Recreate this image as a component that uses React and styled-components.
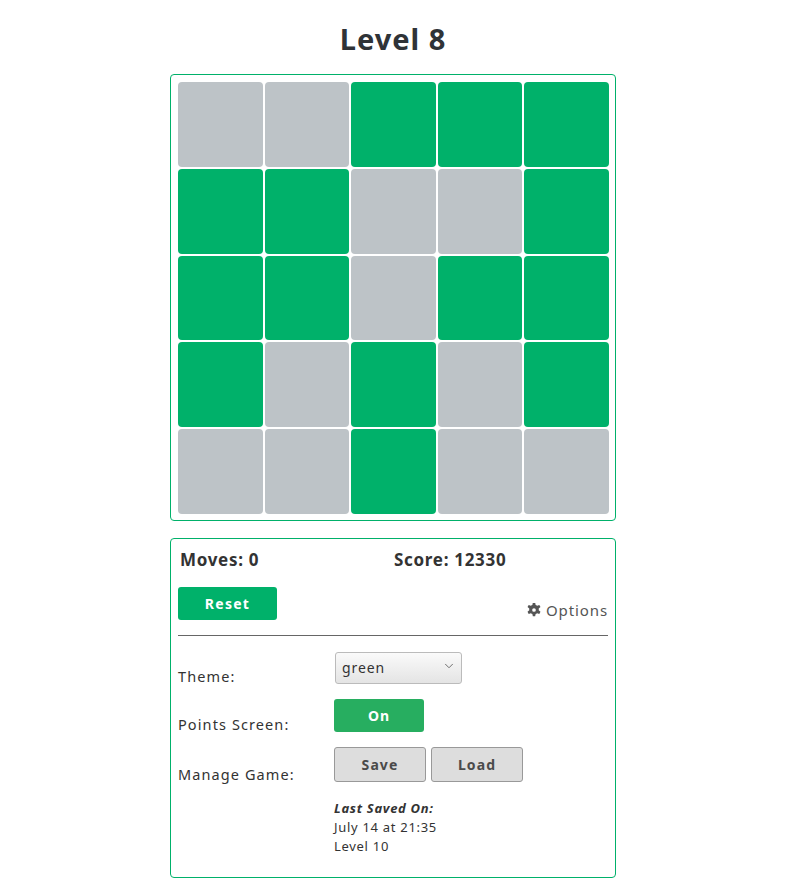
import React from 'react';
import styled, { createGlobalStyle } from 'styled-components';
import { ChevronDown } from 'lucide-react';

const board = [
    [0, 0, 1, 1, 1],
    [1, 1, 0, 0, 1],
    [1, 1, 0, 1, 1],
    [1, 0, 1, 0, 1],
    [0, 0, 1, 0, 0],
];

export default function App() {
    return (
        <Page>
            <GlobalStyle />
            <Title>Level 8</Title>
            <Board>
                {board.flat().map((on, i) => (
                    <Cell key={i} $on={on} />
                ))}
            </Board>
            <Panel>
                <Stats>
                    <Stat>Moves: 0</Stat>
                    <Stat>Score: 12330</Stat>
                </Stats>
                <Actions>
                    <ResetButton>Reset</ResetButton>
                    <OptionsLink>
                        <svg width="14" height="14" viewBox="3 2.5 18 19">
                            <path
                                fill="#555"
                                fillRule="evenodd"
                                d="M13.6 1.5h-3.2l-.6 3.1a7.6 7.6 0 0 0-2 1.1L4.8 4.7 3.2 7.5l2.4 2.1a7.6 7.6 0 0 0 0 2.3l-2.4 2.1 1.6 2.8 3-1a7.6 7.6 0 0 0 2 1.1l.6 3.1h3.2l.6-3.1a7.6 7.6 0 0 0 2-1.1l3 1 1.6-2.8-2.4-2.1a7.6 7.6 0 0 0 0-2.3l2.4-2.1-1.6-2.8-3 1a7.6 7.6 0 0 0-2-1.1zM12 9a2.5 2.5 0 1 1 0 5 2.5 2.5 0 0 1 0-5z"
                                transform="translate(0 0.5)"
                            />
                        </svg>
                        Options
                    </OptionsLink>
                </Actions>
                <Divider />
                <Settings>
                    <Label>Theme:</Label>
                    <SelectWrap>
                        <Select defaultValue="green">
                            <option value="green">green</option>
                            <option value="blue">blue</option>
                            <option value="red">red</option>
                        </Select>
                        <SelectArrow size={14} strokeWidth={1.6} />
                    </SelectWrap>
                    <Label>Points Screen:</Label>
                    <div>
                        <ToggleButton>On</ToggleButton>
                    </div>
                    <Label>Manage Game:</Label>
                    <ButtonRow>
                        <GrayButton>Save</GrayButton>
                        <GrayButton>Load</GrayButton>
                    </ButtonRow>
                    <span />
                    <SaveInfo>
                        <strong>Last Saved On:</strong>
                        <span>July 14 at 21:35</span>
                        <span>Level 10</span>
                    </SaveInfo>
                </Settings>
            </Panel>
        </Page>
    );
}

/* --- STYLES --- */
const GlobalStyle = createGlobalStyle`
    body {
        margin: 0;
        background: #fff;
        font-family: "Noto Sans", "Open Sans", sans-serif;
        color: #333;
    }
`;
const Page = styled.div`
    width: 446px;
    margin: 0 auto;
    padding-top: 20px;
    display: flex;
    flex-direction: column;
`;
const Title = styled.h1`
    margin: 0 0 16px;
    text-align: center;
    font-size: 29px;
    line-height: 38px;
    font-weight: 700;
    letter-spacing: 1px;
    color: #2f3337;
`;
const Board = styled.div`
    border: 1px solid #00b16a;
    border-radius: 4px;
    padding: 7px 6px 6px 7px;
    display: grid;
    grid-template-columns: repeat(5, 1fr);
    grid-auto-rows: 84.8px;
    gap: 2px;
`;
const Cell = styled.div`
    border-radius: 4px;
    background: ${(p) => (p.$on ? '#00b16a' : '#bdc3c7')};
`;
const Panel = styled.div`
    margin-top: 17px;
    border: 1px solid #00b16a;
    border-radius: 4px;
    padding: 9px 7px 28px 7px;
    height: 340px;
    box-sizing: border-box;
`;
const Stats = styled.div`
    display: grid;
    grid-template-columns: 1fr 1fr;
    padding-left: 2px;
`;
const Stat = styled.div`
    font-size: 17px;
    line-height: 24px;
    font-weight: 700;
    letter-spacing: 0.7px;
    color: #333;
`;
const Actions = styled.div`
    margin-top: 15px;
    display: flex;
    justify-content: space-between;
    align-items: flex-end;
`;
const ResetButton = styled.button`
    width: 99px;
    height: 33px;
    border: none;
    border-radius: 3px;
    background: #00b16a;
    color: #fff;
    font-family: inherit;
    font-size: 14px;
    font-weight: 700;
    letter-spacing: 1.3px;
    cursor: pointer;
`;
const OptionsLink = styled.a`
    display: flex;
    align-items: center;
    gap: 5px;
    font-size: 15px;
    letter-spacing: 0.9px;
    color: #555;
    cursor: pointer;
    margin-bottom: 0px;
`;
const Divider = styled.hr`
    margin: 15px 0 16px;
    border: none;
    border-top: 1px solid #666;
`;
const Settings = styled.div`
    display: grid;
    grid-template-columns: 156px 1fr;
    row-gap: 15px;
    align-items: end;
`;
const Label = styled.div`
    font-size: 14.5px;
    letter-spacing: 1.1px;
    color: #333;
    line-height: 20px;
    margin-bottom: -2px;
`;
const SelectWrap = styled.div`
    position: relative;
    width: 127px;
    height: 32px;
    margin-left: 1px;
`;
const Select = styled.select`
    appearance: none;
    width: 100%;
    height: 100%;
    font-family: inherit;
    font-size: 14px;
    letter-spacing: 0.9px;
    color: #333;
    padding: 0 6px;
    border: 1px solid #bbb;
    border-radius: 3px;
    background: linear-gradient(#fafafa, #e4e4e4);
`;
const SelectArrow = styled(ChevronDown)`
    position: absolute;
    right: 6px;
    top: 7px;
    color: #666;
    pointer-events: none;
`;
const ToggleButton = styled.button`
    width: 90px;
    height: 33px;
    border: none;
    border-radius: 3px;
    background: #27ae60;
    color: #fff;
    font-family: inherit;
    font-size: 14px;
    font-weight: 700;
    letter-spacing: 1px;
    cursor: pointer;
`;
const ButtonRow = styled.div`
    display: flex;
    gap: 5px;
`;
const GrayButton = styled.button`
    width: 92px;
    height: 35px;
    border: 1px solid #999;
    border-radius: 3px;
    background: #ddd;
    color: #4a4a4a;
    font-family: inherit;
    font-size: 14px;
    font-weight: 700;
    letter-spacing: 1.1px;
    cursor: pointer;
`;
const SaveInfo = styled.div`
    display: flex;
    flex-direction: column;
    font-size: 13px;
    line-height: 19px;
    letter-spacing: 0.7px;
    color: #333;
    margin-top: 2px;
    strong { font-style: italic; }
`;
